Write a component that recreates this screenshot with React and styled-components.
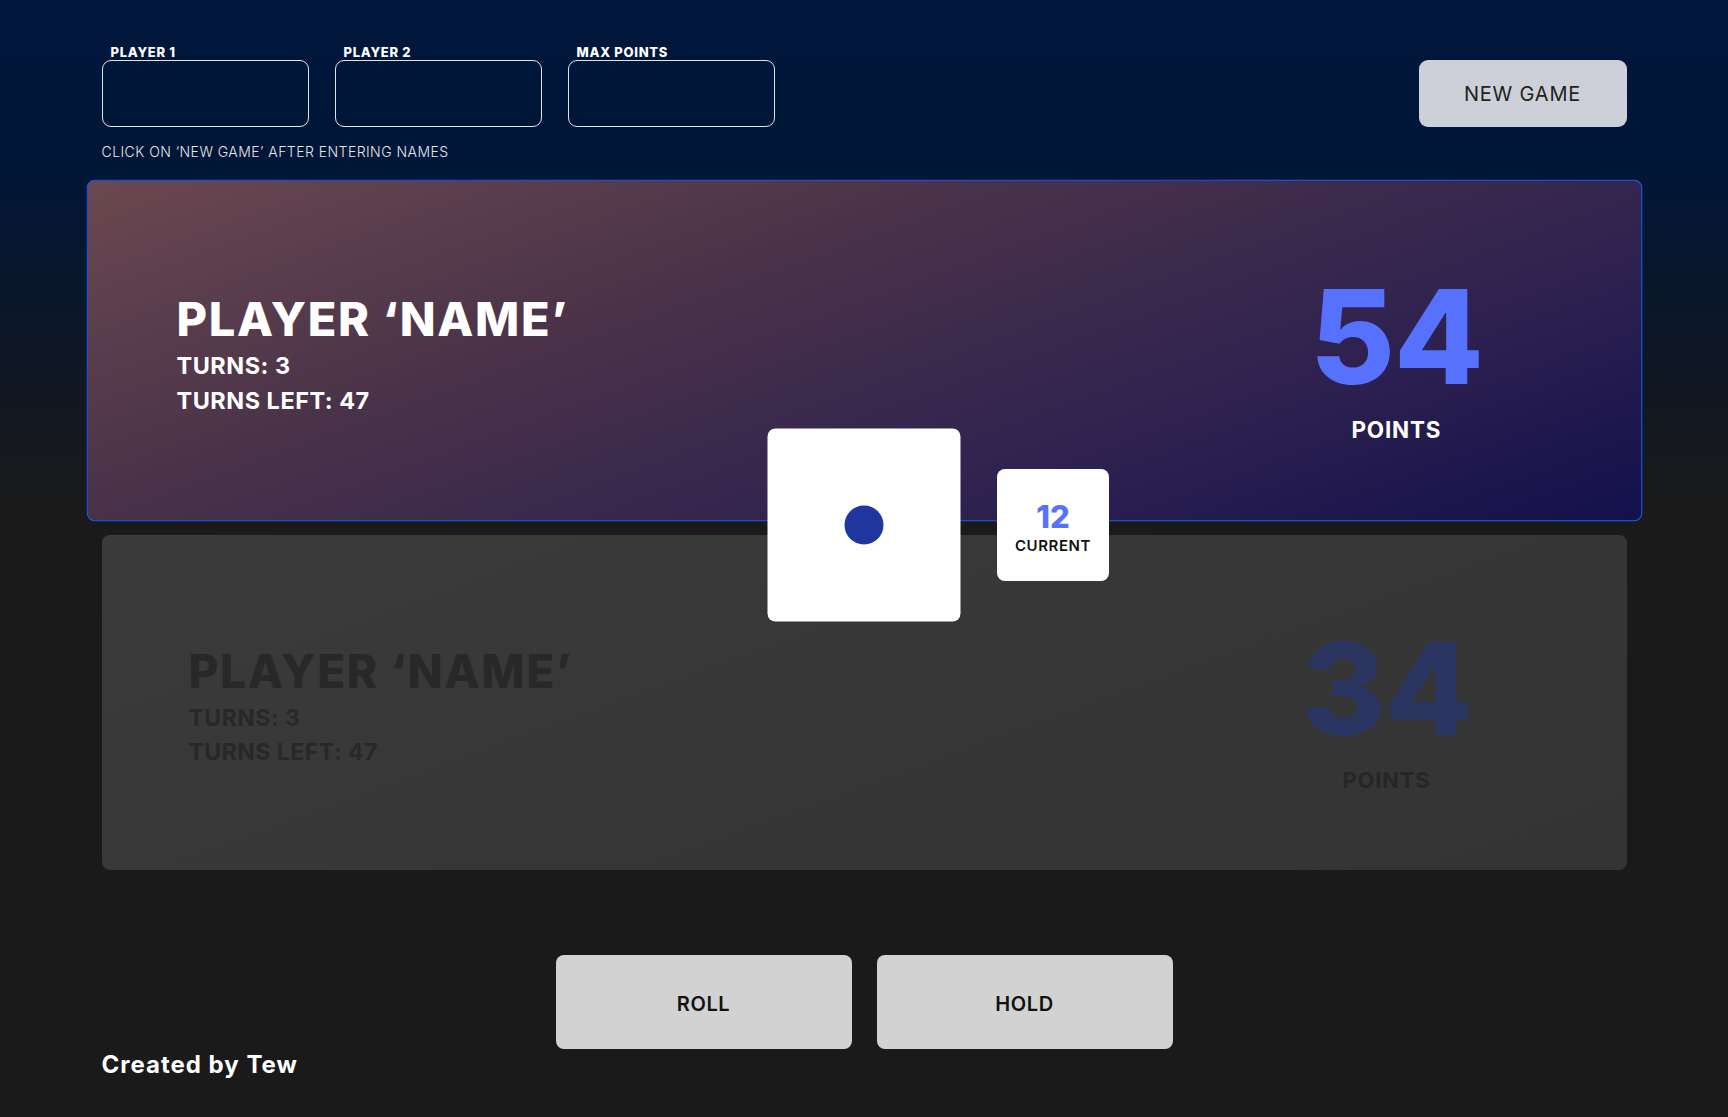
import styled, { createGlobalStyle } from 'styled-components';

const GlobalStyle = createGlobalStyle`
  * {
    box-sizing: border-box;
    margin: 0;
    padding: 0;
  }

  body {
    min-height: 100vh;
    font-family: 'Inter', 'Noto Sans', sans-serif;
    color: #fff;
    background: linear-gradient(180deg, #00163b 0%, #001638 14%, #0d1726 30%, #1a1a1a 46%, #1a1a1a 100%);
    background-color: #1a1a1a;
  }
`;

const players = [
  { id: 1, name: 'PLAYER ‘NAME’', turns: 3, left: 47, points: 54, active: true },
  { id: 2, name: 'PLAYER ‘NAME’', turns: 3, left: 47, points: 34, active: false },
];

const App = () => {
  return (
    <>
      <GlobalStyle />
      <Page>
        <Header>
          <SetupWrapper>
            <FieldRow>
              <Field>
                <FieldLabel>Player 1</FieldLabel>
                <FieldInput />
              </Field>
              <Field>
                <FieldLabel>Player 2</FieldLabel>
                <FieldInput />
              </Field>
              <Field>
                <FieldLabel>Max points</FieldLabel>
                <FieldInput />
              </Field>
            </FieldRow>
            <Hint>CLICK ON ‘NEW GAME’ AFTER ENTERING NAMES</Hint>
          </SetupWrapper>
          <NewGameButton>NEW GAME</NewGameButton>
        </Header>

        <Board>
          {players.map((player) => (
            <PlayerCard key={player.id} $active={player.active}>
              <PlayerInfo $active={player.active}>
                <PlayerName>{player.name}</PlayerName>
                <PlayerStat>TURNS: {player.turns}</PlayerStat>
                <PlayerStat>TURNS LEFT: {player.left}</PlayerStat>
              </PlayerInfo>
              <ScoreBlock>
                <ScoreValue $active={player.active}>{player.points}</ScoreValue>
                <ScoreLabel $active={player.active}>POINTS</ScoreLabel>
              </ScoreBlock>
            </PlayerCard>
          ))}

          <Dice>
            <DiceDot />
          </Dice>
          <CurrentBox>
            <CurrentValue>12</CurrentValue>
            <CurrentLabel>CURRENT</CurrentLabel>
          </CurrentBox>
        </Board>

        <Controls>
          <ActionButton>ROLL</ActionButton>
          <ActionButton>HOLD</ActionButton>
        </Controls>

        <Footer>Created by Tew</Footer>
      </Page>
    </>
  );
};

export default App;

const Page = styled.div`
  width: 1525px;
  margin: 0 auto;
  padding-top: 45px;
`;

const Header = styled.header`
  display: flex;
  justify-content: space-between;
  align-items: flex-start;
`;

const SetupWrapper = styled.div`
  display: flex;
  flex-direction: column;
`;

const FieldRow = styled.div`
  display: flex;
  gap: 26px;
`;

const Field = styled.label`
  display: flex;
  flex-direction: column;
`;

const FieldLabel = styled.span`
  padding-left: 9px;
  font-size: 13px;
  line-height: 15px;
  font-weight: 800;
  letter-spacing: 0.7px;
  text-transform: uppercase;
  color: #fff;
`;

const FieldInput = styled.input`
  width: 207px;
  height: 67px;
  border: 1px solid #e4e4e4;
  border-radius: 9px;
  background: transparent;
  color: #fff;
  font-family: inherit;
  font-size: 18px;
  padding: 0 14px;
  outline: none;
`;

const Hint = styled.p`
  margin-top: 16px;
  font-size: 14px;
  line-height: 18px;
  font-weight: 300;
  letter-spacing: 0.45px;
  color: #e6e6e6;
`;

const NewGameButton = styled.button`
  margin-top: 15px;
  width: 208px;
  height: 67px;
  border: none;
  border-radius: 9px;
  background-color: #cdd0d8;
  color: #222;
  font-family: inherit;
  font-size: 20px;
  font-weight: 400;
  letter-spacing: 0.8px;
  cursor: pointer;
`;

const Board = styled.div`
  position: relative;
  margin-top: 22px;
  display: flex;
  flex-direction: column;
  gap: 17px;
`;

const PlayerCard = styled.section`
  height: 335px;
  display: flex;
  justify-content: space-between;
  align-items: center;
  padding: 0 90px 0 87px;
  border-radius: 8px;
  background: ${({ $active }) =>
    $active
      ? 'linear-gradient(160deg, #6b4850 0%, #4a3349 35%, #2f2250 70%, #13104c 100%)'
      : 'linear-gradient(160deg, #3b3b3b 0%, #363636 60%, #343434 100%)'};
  border: ${({ $active }) => ($active ? '1px solid #1b5cff' : 'none')};
  transform: ${({ $active }) => ($active ? 'scale(1.02)' : 'none')};
`;

const PlayerInfo = styled.div`
  display: flex;
  flex-direction: column;
  padding-top: 7px;
  color: ${({ $active }) => ($active ? '#fff' : '#282828')};
`;

const PlayerName = styled.h2`
  font-size: 46px;
  line-height: 54px;
  font-weight: 800;
  letter-spacing: 1.6px;
  margin-bottom: 3px;
`;

const PlayerStat = styled.p`
  font-size: 23px;
  line-height: 34px;
  font-weight: 700;
  letter-spacing: 0.5px;
`;

const ScoreBlock = styled.div`
  width: 300px;
  display: flex;
  flex-direction: column;
  align-items: center;
  padding-top: 12px;
`;

const ScoreValue = styled.span`
  font-size: 128px;
  line-height: 130px;
  font-weight: 800;
  letter-spacing: -1px;
  color: ${({ $active }) => ($active ? '#5771ff' : '#2b3561')};
`;

const ScoreLabel = styled.span`
  margin-top: 13px;
  font-size: 22px;
  font-weight: 700;
  letter-spacing: 0.8px;
  color: ${({ $active }) => ($active ? '#fff' : '#262626')};
`;

const Dice = styled.div`
  position: absolute;
  left: 50%;
  top: 50%;
  width: 193px;
  height: 193px;
  transform: translate(-50%, -50%);
  margin-top: -2px;
  border-radius: 8px;
  background-color: #fff;
  display: flex;
  align-items: center;
  justify-content: center;
`;

const DiceDot = styled.span`
  width: 39px;
  height: 39px;
  border-radius: 50%;
  background-color: #1f35a0;
`;

const CurrentBox = styled.div`
  position: absolute;
  left: calc(50% + 133px);
  top: 50%;
  width: 112px;
  height: 112px;
  transform: translateY(-50%);
  margin-top: -2px;
  padding-top: 6px;
  border-radius: 8px;
  background-color: #fff;
  display: flex;
  flex-direction: column;
  align-items: center;
  justify-content: center;
  gap: 2px;
`;

const CurrentValue = styled.span`
  font-size: 31px;
  line-height: 34px;
  font-weight: 800;
  color: #5771ff;
`;

const CurrentLabel = styled.span`
  font-size: 15px;
  font-weight: 600;
  letter-spacing: 0.6px;
  color: #111;
`;

const Controls = styled.div`
  margin-top: 85px;
  display: flex;
  justify-content: center;
  gap: 25px;
`;

const ActionButton = styled.button`
  width: 296px;
  height: 94px;
  border: none;
  border-radius: 8px;
  background-color: #d2d2d2;
  color: #111;
  font-family: inherit;
  font-size: 20px;
  font-weight: 600;
  letter-spacing: 0.6px;
  padding-top: 3px;
  cursor: pointer;
`;

const Footer = styled.footer`
  margin-top: 2px;
  font-size: 24px;
  line-height: 28px;
  font-weight: 700;
  letter-spacing: 1px;
  color: #fff;
`;
